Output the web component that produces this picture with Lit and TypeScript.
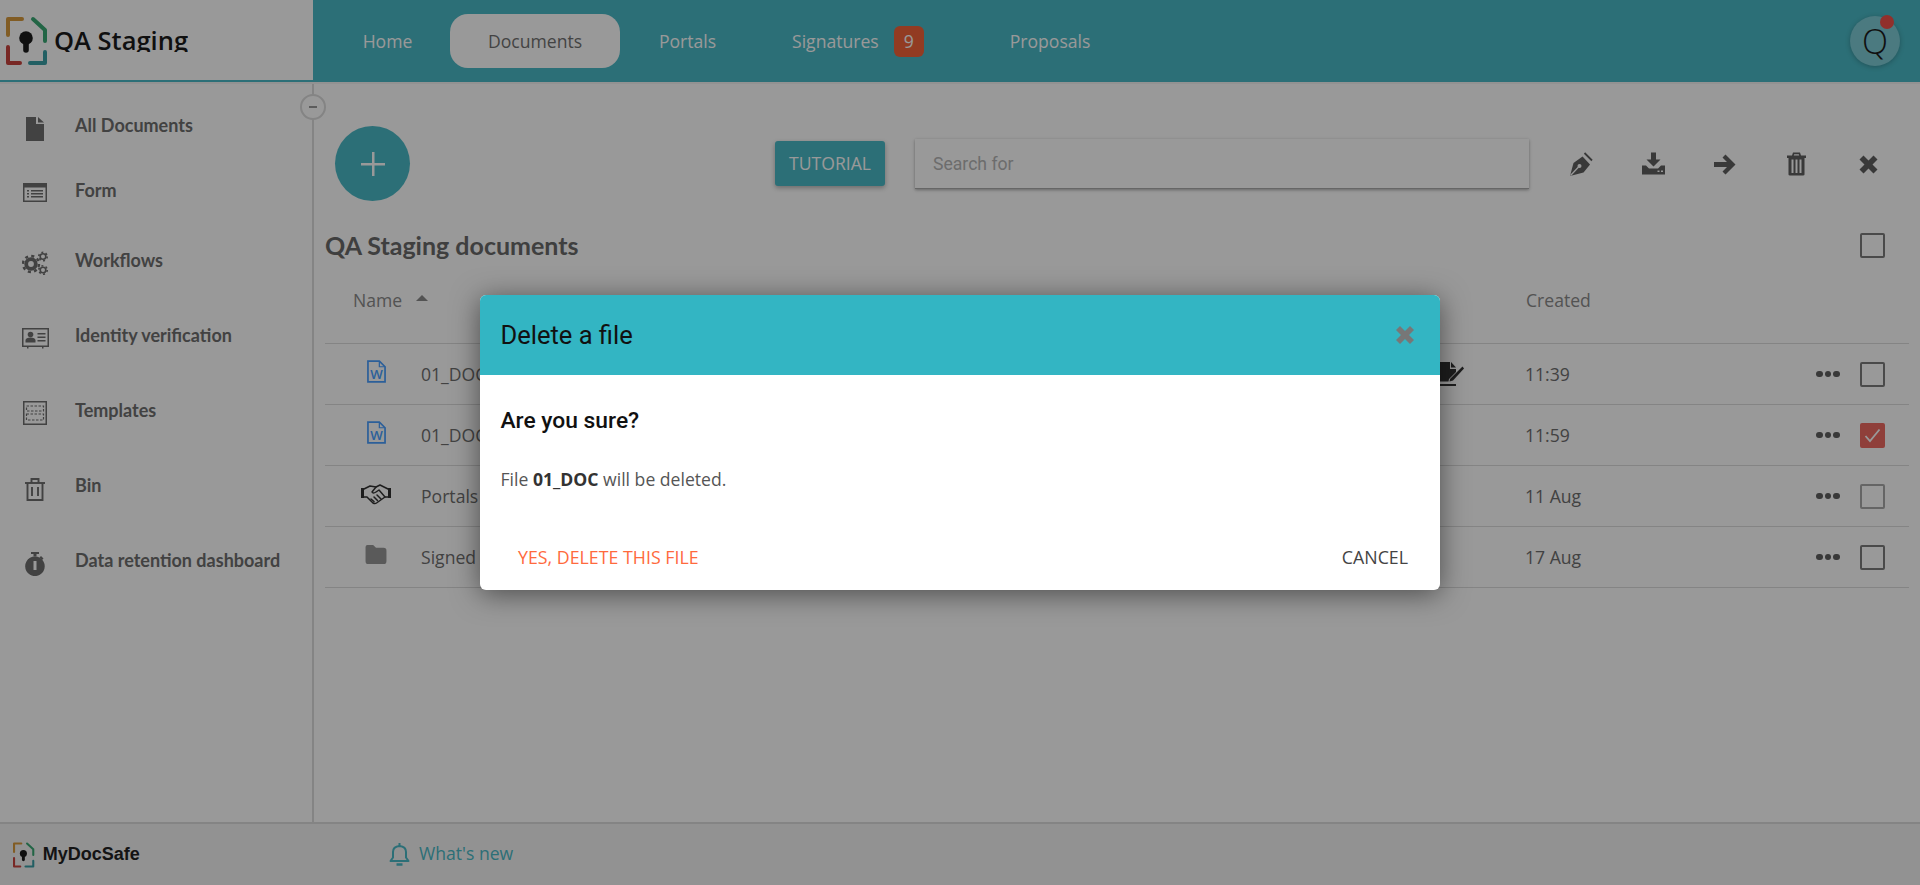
import { LitElement, html, css, svg } from "lit";
import { customElement } from "lit/decorators.js";

const logo = (s: number) => html`<svg class="logo" width=${42 * s} height=${50 * s} viewBox="6 16 42 50" fill="none" stroke-width="4" stroke-linecap="round" stroke-linejoin="round">
  <path d="M8 35V19H22" stroke="#d89a3c"/>
  <path d="M33 19L45 30V41" stroke="#3aa874"/>
  <path d="M8 47V63H20" stroke="#c8443e"/>
  <path d="M30 63H45V52" stroke="#3a9ea6"/>
  <circle cx="26" cy="38" r="6.8" fill="#1c1c1c" stroke="none"/>
  <path d="M26 40V50" stroke="#1c1c1c" stroke-width="5.6"/>
</svg>`;

const sideIcons: Record<string, any> = {
  file: svg`<path d="M3 0H13V7H21V24H3Z"/><path d="M15 0L21 5.5H15Z"/>`,
  form: svg`<path fill-rule="evenodd" d="M1 3H25V22H1ZM2.500 7.500V20.500H23.500V7.500Z"/><path d="M5 10H7V11.500H5ZM9 10H21V11.500H9ZM5 13H7V14.500H5ZM9 13H21V14.500H9ZM5 16H7V17.500H5ZM9 16H21V17.500H9Z"/>`,
  gears: svg`<g fill="none" stroke="currentColor"><circle cx="9" cy="14" r="4.800" stroke-width="3.800"/><circle cx="9" cy="14" r="8" stroke-width="2.400" stroke-dasharray="3.100 3.180"/><circle cx="21" cy="6.500" r="2.800" stroke-width="1.600"/><circle cx="21" cy="6.500" r="4.200" stroke-width="1.600" stroke-dasharray="2 2.400"/><circle cx="21" cy="20" r="2.800" stroke-width="1.600"/><circle cx="21" cy="20" r="4.200" stroke-width="1.600" stroke-dasharray="2 2.400"/></g>`,
  id: svg`<path fill-rule="evenodd" d="M0 3H27V22H0ZM1.500 4.500V20.500H25.500V4.500Z"/><circle cx="8.500" cy="9.500" r="2.800"/><path d="M3.500 17.500V15Q4 12.500 8.500 12.500T13.500 15V17.500ZM15.500 8H23.500V9.500H15.500ZM15.500 11.500H23.500V13H15.500ZM15.500 15H23.500V16.500H15.500Z"/><path d="M5 22h1.500v1.500H5zM20 22h1.500v1.500H20z"/>`,
  tpl: svg`<path fill-rule="evenodd" d="M1 0H25V24H1ZM2.500 1.500V22.500H23.500V1.500Z"/><path d="M4.500 5h17v5h-17z" fill="none" stroke="currentColor" stroke-width="1.200" stroke-dasharray="2.500 1.500"/><path d="M4.500 13h17v6h-17z" fill="none" stroke="currentColor" stroke-width="1.200" stroke-dasharray="2.500 1.500"/>`,
  bin: svg`<g fill="none" stroke="currentColor" stroke-width="1.900"><path d="M3 6H23"/><path d="M9.500 6V2H16.500V6"/><path d="M5.500 6V23H20.500V6"/><path d="M10 10V19M16 10V19"/></g>`,
  watch: svg`<path d="M9 0H17V2H14.500V4.500H11.500V2H9Z"/><path fill-rule="evenodd" d="M13 4.500A9.800 9.800 0 1 1 12.900 4.500ZM11.500 9V18H14.500V9Z"/><path d="M19 4L21.500 6.500L20 8L17.500 5.500Z"/>`,
};

const actions = [
  svg`<path d="M1 24.500L4.500 11.500 13.500 5 21 13 14.500 21Z"/><path d="M1.500 24L9.500 15.500" stroke="#fff" stroke-width="1.300"/><circle cx="10.500" cy="14.500" r="2" fill="#fff"/><path d="M15.500 1.500L23 9" stroke="currentColor" stroke-width="1.800"/>`,
  svg`<path d="M10 1H15V8H19.500L12.500 15 5.500 8H10Z"/><path fill-rule="evenodd" d="M1 14H5L8 17H17L20 14H24V23H1ZM16.500 19V20.500H18.500V19ZM20 19V20.500H22V19Z"/>`,
  svg`<path d="M13.500 3L23.500 13 13.500 23 10.500 20 15 15.500H2V10.500H15L10.500 6Z"/>`,
  svg`<path fill-rule="evenodd" d="M9 1H16L17 4H22V6.500H20.500V23Q20.500 24 19 24H6Q4.500 24 4.500 23V6.500H3V4H8ZM10.200 2.800L9.800 4H15.200L14.800 2.800ZM7.500 8V21.500H9.500V8ZM11.500 8V21.500H13.500V8ZM15.500 8V21.500H17.500V8Z"/>`,
  svg`<path d="M7.500 4L12.500 9 17.500 4 21.500 8 16.500 13 21.500 18 17.500 22 12.500 17 7.500 22 3.500 18 8.500 13 3.500 8Z"/>`,
];

const wordIcon = html`<svg class="ico blue" width="19" height="23" viewBox="0 0 20 24"><path d="M1 1H13L19 7V23H1Z" fill="none" stroke="currentColor" stroke-width="1.800"/><path d="M13 1V7H19" fill="none" stroke="currentColor" stroke-width="1.300"/><text x="10" y="20" text-anchor="middle" class="w">W</text></svg>`;
const shake = html`<svg class="ico dark" width="30" height="22" viewBox="0 0 30 22"><path d="M0 5H3V15H0ZM27 5H30V15H27Z"/><g fill="none" stroke="currentColor" stroke-width="1.500" stroke-linejoin="round" stroke-linecap="round"><path d="M3 6L9 3 15 4 19 2 27 6"/><path d="M3 14L6 14 12 20Q14 21 15.500 20L24 14H27"/><path d="M15 4L11 9Q12 11 15 9L18 7 24 14"/><path d="M10 16L13 18.500M13 14L16.500 17.500M16 12L20 16"/></g></svg>`;
const folder = html`<svg class="ico grey" width="22" height="19" viewBox="0 0 22 20"><path d="M0 2Q0 0 2 0H8L11 3H19Q22 3 22 6V17Q22 20 19 20H3Q0 20 0 17Z"/></svg>`;
const signIco = html`<svg class="ico dark" width="25" height="24" viewBox="0 0 25 24"><path d="M0 0H11V7H17V10L10 17 9.500 19.500H0Z"/><path d="M12 0L17 5.500H12Z"/><path d="M11 17L20 8 23.500 4.500 25 6.500 14 18.500 10.500 19.500Z"/><path d="M0 22H17V24H0Z"/></svg>`;

const side = [
  { t: "All Documents", i: "file", h: 60, w: 24, ih: 24, o: 4 },
  { t: "Form", i: "form", h: 70, w: 26, ih: 26, o: 3 },
  { t: "Workflows", i: "gears", h: 70, w: 26, ih: 26, o: 3 },
  { t: "Identity verification", i: "id", h: 80, w: 27, ih: 26, o: 3 },
  { t: "Templates", i: "tpl", h: 70, w: 26, ih: 24, o: 3 },
  { t: "Bin", i: "bin", h: 80, w: 26, ih: 24, o: 4 },
  { t: "Data retention dashboard", i: "watch", h: 70, w: 26, ih: 24, o: 4 },
];

const rows = [
  { ic: wordIcon, n: "01_DOC", s: signIco, c: "11:39", st: "" },
  { ic: wordIcon, n: "01_DOC", s: null, c: "11:59", st: "on" },
  { ic: shake, n: "Portals", s: null, c: "11 Aug", st: "soft" },
  { ic: folder, n: "Signed", s: null, c: "17 Aug", st: "" },
];

@customElement("app-root")
export class AppRoot extends LitElement {
  static styles = css`
    :host { display: block; height: 885px; overflow: hidden; font-family: "Open Sans", sans-serif; background: #fff; position: relative; }
    * { box-sizing: border-box; }
    .page { height: 885px; display: flex; flex-direction: column; }
    header { height: 84px; flex: none; display: flex; background: #4ab9c6; border-bottom: 2px solid #f4f4f4; }
    .brand { width: 313px; height: 82px; background: #fff; border-bottom: 2px solid #4ab9c6; display: flex; align-items: flex-start; padding: 16px 0 0 6px; overflow: hidden; }
    .brand .name { margin: 6px 0 0 6px; font-size: 25.500px; font-weight: 600; color: #1c1c1c; line-height: 36px; height: 30px; overflow: hidden; white-space: nowrap; }
    nav { flex: 1; display: flex; align-items: center; height: 82px; font-size: 17.6px; color: #fff; }
    nav a { display: flex; align-items: center; justify-content: center; height: 54px; }
    nav .home { margin-left: 49px; width: 51px; }
    nav .docs { margin-left: 37px; width: 170px; background: #fff; color: #717171; border-radius: 18px; }
    nav .portals { margin-left: 39px; width: 57px; }
    nav .sig { margin-left: 76px; }
    nav .badge { margin-left: 15px; width: 30px; height: 31px; background: #f4633a; border-radius: 6px; display: flex; align-items: center; justify-content: center; font-size: 17.6px; }
    nav .prop { margin-left: 86px; }
    .avatar { margin-left: auto; margin-right: 20px; width: 50px; height: 50px; border-radius: 50%; background: #7dcbd5; color: #1c1c1c; font-size: 34px; font-weight: 300; display: flex; align-items: center; justify-content: center; position: relative; box-shadow: 0 1px 5px rgba(0,0,0,.25); }
    .avatar i { position: absolute; width: 14px; height: 14px; border-radius: 50%; background: #f2504a; top: -1px; right: 6px; }
    .content { flex: 1; display: flex; min-height: 0; }
    aside { width: 314px; flex: none; border-right: 2px solid #dcdcdc; padding-top: 11px; position: relative; }
    .collapse { position: absolute; top: 10px; right: -14px; width: 26px; height: 26px; border-radius: 50%; border: 2px solid #dcdcdc; background: #fff; display: flex; align-items: center; justify-content: center; }
    .collapse b { width: 8px; height: 2px; background: #999; }
    .sitem { display: flex; align-items: center; color: #6e6e6e; font-family: Lato, sans-serif; font-weight: 700; font-size: 18px; }
    .sicon { width: 75px; flex: none; display: flex; justify-content: center; color: #6e6e6e; }
    .sicon svg { fill: currentColor; display: block; margin-right: 5px; }
    main { flex: 1; padding-left: 10px; padding-right: 11px; min-width: 0; }
    .toolbar { display: flex; align-items: center; padding-top: 42px; height: 117px; }
    .fab { width: 75px; height: 75px; margin-left: 11px; border-radius: 50%; background: #4ab9c6; display: flex; align-items: center; justify-content: center; flex: none; }
    .tut { margin-left: 365px; width: 110px; height: 45px; padding-bottom: 2px; background: #4ab9c6; color: #fff; font-size: 17.6px; border-radius: 3px; display: flex; align-items: center; justify-content: center; box-shadow: 0 2px 5px rgba(0,0,0,.3); flex: none; }
    .search { margin-left: 30px; width: 614px; height: 50px; background: #fff; box-shadow: 0 1px 3px rgba(0,0,0,.35); display: flex; align-items: center; padding: 2px 0 0 18px; font-family: Roboto, sans-serif; font-size: 17.6px; color: #b5b5b5; flex: none; border-bottom: 1px solid #aaa; }
    .acts { display: flex; margin-left: 17px; }
    .act { width: 71.600px; display: flex; justify-content: center; color: #5f5f5f; }
    .act svg { fill: currentColor; display: block; }
    .title { display: flex; align-items: center; justify-content: space-between; height: 44px; margin-top: 22px; padding-left: 1px; padding-right: 24px; font-family: Lato, sans-serif; font-weight: 700; font-size: 25px; color: #6a6a6a; }
    .chk { width: 25px; height: 25px; border: 2px solid #7c7c7c; border-radius: 2px; display: block; flex: none; }
    .chk.soft { border-color: #a8a8a8; }
    .chk.on { background: #ee6a62; border-color: #ee6a62; display: flex; align-items: center; justify-content: center; }
    .grid { display: grid; grid-template-columns: 96px 1004px 100px 290px 45px 25px 24px; align-items: center; border-bottom: 1px solid #dcdcdc; margin-left: 1px; width: 1584px; }
    .thead { height: 77px; padding-bottom: 10px; font-size: 17.6px; color: #8a8a8a; }
    .thead .nm { grid-column: 1 / 3; padding-left: 28px; display: flex; align-items: center; }
    .thead .cr { grid-column: 4; padding-left: 1px; }
    .arrow { margin-left: 14px; margin-top: -5px; width: 0; height: 0; border-left: 6px solid transparent; border-right: 6px solid transparent; border-bottom: 6px solid #8a8a8a; }
    .row { height: 61px; color: #6e6e6e; font-size: 17.6px; }
    .row .ic { display: flex; justify-content: center; padding-left: 6px; margin-top: -5px; }
    .row .nme { white-space: nowrap; }
    .row .sg { padding-left: 14px; display: flex; }
    .row .dots { display: flex; gap: 2px; padding-left: 1px; }
    .row .dots i { width: 6.500px; height: 6.500px; border-radius: 50%; background: #5f5f5f; }
    .ico { fill: currentColor; display: block; flex: none; }
    .blue { color: #4a9fff; }
    .dark { color: #333; }
    .grey { color: #969696; }
    .w { font-family: "Open Sans", sans-serif; font-size: 14px; font-weight: 600; fill: currentColor; }
    footer { height: 63px; flex: none; border-top: 2px solid #dcdcdc; display: flex; align-items: center; background: #f4f4f4; }
    .fbrand { display: flex; align-items: center; padding-left: 13px; width: 389px; flex: none; }
    .fbrand span { margin-left: 8px; font-family: "Liberation Sans", sans-serif; font-weight: 700; font-size: 18px; color: #222; }
    .wn { display: flex; align-items: center; color: #4ab9c6; font-size: 17.6px; margin-top: -4px; }
    .wn svg { margin-right: 9px; margin-top: 3px; display: block; }
    .overlay { position: absolute; inset: 0; background: rgba(0,0,0,.4); z-index: 5; }
    .modal { position: absolute; z-index: 6; left: 480px; top: 295px; width: 960px; height: 295px; background: #fff; border-radius: 6px; overflow: hidden; box-shadow: 0 4px 28px rgba(0,0,0,.5); display: flex; flex-direction: column; }
    .mhead { height: 80px; flex: none; background: #33b5c3; display: flex; align-items: center; justify-content: space-between; padding: 0 25px 0 20.500px; font-family: Roboto, sans-serif; font-size: 25.500px; color: #111; }
    .mhead svg { fill: #777; display: block; }
    .mbody { padding: 0 20.500px; flex: 1; }
    .q { font-family: Roboto, sans-serif; font-weight: 500; font-size: 22.800px; color: #111; margin-top: 31px; line-height: 30px; }
    .msg { font-size: 17.6px; color: #555; margin-top: 31px; line-height: 24px; }
    .msg b { color: #333; }
    .mfoot { display: flex; justify-content: space-between; height: 60px; padding: 0 32px 7px 38px; align-items: center; font-size: 17.8px; }
    .yes { color: #ff6a3d; }
    .no { color: #444; }
  `;

  render() {
    return html`
      <div class="page">
        <header>
          <div class="brand">${logo(1)}<div class="name">QA Staging</div></div>
          <nav>
            <a class="home">Home</a>
            <a class="docs">Documents</a>
            <a class="portals">Portals</a>
            <a class="sig">Signatures</a><span class="badge">9</span>
            <a class="prop">Proposals</a>
            <div class="avatar">Q<i></i></div>
          </nav>
        </header>
        <div class="content">
          <aside>
            <div class="collapse"><b></b></div>
            ${side.map(
              (s) => html`<div class="sitem" style="height:${s.h}px">
                <span class="sicon" style="margin-top:${s.o * 2}px"><svg width=${s.w} height=${s.ih} viewBox="0 0 ${s.w} ${s.ih}">${sideIcons[s.i]}</svg></span>
                <span>${s.t}</span>
              </div>`
            )}
          </aside>
          <main>
            <div class="toolbar">
              <div class="fab"><svg width="24" height="24" viewBox="0 0 24 24"><path d="M11 0h2.500v11H24v2.500H13.500V24H11V13.500H0V11h11z" fill="#fff"/></svg></div>
              <div class="tut">TUTORIAL</div>
              <div class="search">Search for</div>
              <div class="acts">
                ${actions.map((a) => html`<span class="act"><svg width="25" height="26" viewBox="0 0 25 25">${a}</svg></span>`)}
              </div>
            </div>
            <div class="title"><span>QA Staging documents</span><span class="chk"></span></div>
            <div class="grid thead">
              <div class="nm">Name<span class="arrow"></span></div>
              <div class="cr">Created</div>
            </div>
            ${rows.map(
              (r) => html`<div class="grid row">
                <div class="ic">${r.ic}</div>
                <div class="nme">${r.n}</div>
                <div class="sg">${r.s}</div>
                <div>${r.c}</div>
                <div class="dots"><i></i><i></i><i></i></div>
                <span class="chk ${r.st}">${r.st === "on"
                  ? html`<svg width="17" height="15" viewBox="0 0 17 15"><path d="M1.500 8L6 13 15.500 1.500" fill="none" stroke="#fff" stroke-width="1.800"/></svg>`
                  : ""}</span>
                <div></div>
              </div>`
            )}
          </main>
        </div>
        <footer>
          <div class="fbrand">${logo(0.52)}<span>MyDocSafe</span></div>
          <div class="wn">
            <svg width="21" height="25" viewBox="0 0 21 25" fill="none" stroke="#4ab9c6" stroke-width="2"><path d="M1.500 19H19.500L17 15.500V10Q17 4.500 10.500 4 4 4.500 4 10V15.500Z" stroke-linejoin="round"/><path d="M10.500 1V4"/><path d="M7.500 22.500H13.500" stroke-width="2.500"/></svg>
            What's new
          </div>
        </footer>
      </div>
      <div class="overlay"></div>
      <div class="modal">
        <div class="mhead">
          <span>Delete a file</span>
          <svg width="20" height="20" viewBox="0 0 20 20"><path d="M5 1L10 6 15 1 19 5 14 10 19 15 15 19 10 14 5 19 1 15 6 10 1 5Z"/></svg>
        </div>
        <div class="mbody">
          <div class="q">Are you sure?</div>
          <div class="msg">File <b>01_DOC</b> will be deleted.</div>
        </div>
        <div class="mfoot"><span class="yes">YES, DELETE THIS FILE</span><span class="no">CANCEL</span></div>
      </div>
    `;
  }
}
